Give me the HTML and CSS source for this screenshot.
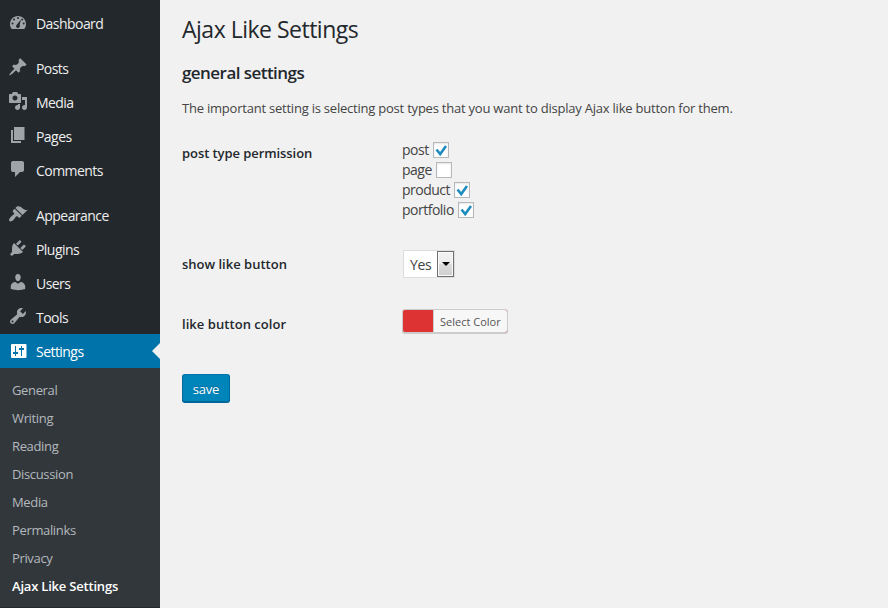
FILE: index.html
```html
<!DOCTYPE html>
<html lang="en">
<head>
<meta charset="utf-8">
<title>Ajax Like Settings</title>
<link rel="stylesheet" href="styles.css">
</head>
<body>
<div class="layout">
<nav class="sidebar">
<ul class="menu">
<li class="item gap"><svg class="icon" viewBox="0 0 20 20"><path fill-rule="evenodd" d="M3.76 17h12.48c1.1-1.37 1.76-3.11 1.76-5 0-4.42-3.58-8-8-8s-8 3.58-8 8c0 1.89.66 3.63 1.76 5zM10 5a1 1 0 1 1 0 2a1 1 0 1 1 0-2zM6 6.5a1 1 0 1 1 0 2a1 1 0 1 1 0-2zM13 7.500L11.700 12.500C12.300 14.600 11.500 16 10 16C8.300 16 7.500 14.400 8.500 13.100zM14.200 6.500a1 1 0 1 1 0 2a1 1 0 1 1 0-2zM4.500 10.500a1 1 0 1 1 0 2a1 1 0 1 1 0-2zM15.700 10.500a1 1 0 1 1 0 2a1 1 0 1 1 0-2z"/></svg><span>Dashboard</span></li>
<li class="item"><svg class="icon" viewBox="0 0 20 20"><path d="M10.440 3.020l1.820-1.820 6.360 6.350-1.830 1.820c-1.050-.68-2.480-.57-3.410.36l-.75.75c-.92.93-1.040 2.350-.35 3.410l-1.830 1.820-2.410-2.410-2.800 2.790c-.42.42-3.380 2.710-3.800 2.290s1.860-3.390 2.280-3.810l2.790-2.790L4.100 9.360l1.830-1.820c1.050.69 2.480.57 3.400-.36l.75-.75c.93-.92 1.050-2.350.36-3.410z"/></svg><span>Posts</span></li>
<li class="item"><svg class="icon" viewBox="0 0 20 20"><path d="M13 11V4c0-.55-.45-1-1-1h-1.670L9 1H5L3.670 3H2c-.55 0-1 .45-1 1v7c0 .55.45 1 1 1h10c.55 0 1-.45 1-1zM7 4.500c1.380 0 2.500 1.120 2.500 2.500S8.380 9.500 7 9.500 4.500 8.380 4.500 7 5.620 4.500 7 4.500zM14 6h5v10.500c0 1.380-1.120 2.500-2.500 2.500S14 17.880 14 16.500s1.120-2.500 2.500-2.500c.17 0 .34.02.5.05V9h-3V6zm-4 8.050V13h2v3.500c0 1.380-1.120 2.500-2.500 2.500S7 17.880 7 16.500 8.120 14 9.500 14c.17 0 .34.02.5.05z"/></svg><span>Media</span></li>
<li class="item"><svg class="icon" viewBox="0 0 20 20"><path d="M6 15V2h10.500v13H6zm-1 1h8v2H3V5h2v11z"/></svg><span>Pages</span></li>
<li class="item gap"><svg class="icon" viewBox="0 0 20 20"><path d="M5 2h9c1.100 0 2 .9 2 2v7c0 1.100-.9 2-2 2h-2l-5 5v-5H5c-1.100 0-2-.9-2-2V4c0-1.100.9-2 2-2z"/></svg><span>Comments</span></li>
<li class="item"><svg class="icon" viewBox="0 0 20 20"><path d="M14.480 11.060L7.410 3.990l1.500-1.500c.5-.56 2.300-.47 3.510.32 1.210.8 1.430 1.280 2.910 2.100 1.180.64 2.450 1.260 4.450.85zm-.71.71L6.700 4.700 4.930 6.470c-.39.39-.39 1.020 0 1.410l1.060 1.060c.39.39.39 1.030 0 1.420-.6.6-1.430 1.110-2.210 1.690-.35.26-.7.53-1.010.84C1.430 14.230.4 16.080 1.400 17.070c.99 1 2.840-.03 4.180-1.360.31-.31.58-.66.85-1.020.57-.78 1.080-1.610 1.690-2.210.39-.39 1.020-.39 1.410 0l1.060 1.060c.39.39 1.020.39 1.410 0z"/></svg><span>Appearance</span></li>
<li class="item"><svg class="icon" viewBox="0 0 20 20"><path d="M13.110 4.360L9.870 7.600 8 5.730l3.240-3.240c.35-.34 1.050-.2 1.560.32.52.51.66 1.210.31 1.550zm-8 1.770l.91-1.120 9.010 9.010-1.190.84c-.71.71-2.630 1.160-3.820 1.160H6.140L4.900 17.260c-.59.59-1.540.59-2.120 0-.59-.58-.59-1.530 0-2.120l1.240-1.240v-3.880c0-1.130.4-3.190 1.090-3.890zm7.260 3.970l3.240-3.240c.34-.35 1.040-.21 1.550.31.52.51.66 1.210.31 1.550l-3.240 3.250z"/></svg><span>Plugins</span></li>
<li class="item"><svg class="icon" viewBox="0 0 20 20"><path d="M10 9.250c-2.270 0-2.730-3.440-2.730-3.440C7 4.020 7.820 2 9.970 2c2.160 0 2.980 2.020 2.710 3.810 0 0-.41 3.440-2.680 3.440zm0 2.570L12.720 10c2.390 0 4.520 2.330 4.520 4.530v2.490s-3.650 1.130-7.240 1.130c-3.650 0-7.240-1.130-7.240-1.130v-2.490c0-2.250 1.940-4.480 4.470-4.480z"/></svg><span>Users</span></li>
<li class="item"><svg class="icon" viewBox="0 0 20 20"><path d="M16.680 9.770c-1.340 1.340-3.300 1.670-4.950.99l-5.410 6.520c-.99.99-2.590.99-3.580 0s-.99-2.590 0-3.570l6.520-5.420c-.68-1.650-.35-3.610.99-4.950 1.280-1.280 3.120-1.620 4.720-1.060l-2.890 2.890 2.820 2.820 2.860-2.870c.53 1.580.18 3.390-1.080 4.650zM3.810 16.210c.4.39 1.040.39 1.430 0 .4-.4.4-1.040 0-1.430-.39-.4-1.030-.4-1.430 0-.39.39-.39 1.030 0 1.430z"/></svg><span>Tools</span></li>
<li class="item current"><svg class="icon" viewBox="0 0 20 20"><path fill-rule="evenodd" d="M4 4H17.500Q18.500 4 18.500 5V17Q18.500 18 17.500 18H4Q3 18 3 17V5Q3 4 4 4zM7 6v6H5v2h2v2h1v-2h2v-2H8V6zM13 6v2h-2v2h2v6h1v-6h2V8h-2V6z"/></svg><span>Settings</span></li>
</ul>
<ul class="submenu">
<li>General</li>
<li>Writing</li>
<li>Reading</li>
<li>Discussion</li>
<li>Media</li>
<li>Permalinks</li>
<li>Privacy</li>
<li class="active">Ajax Like Settings</li>
</ul>
</nav>
<main class="content">
<h1>Ajax Like Settings</h1>
<h2>general settings</h2>
<p class="intro">The important setting is selecting post types that you want to display Ajax like button for them.</p>
<form class="form">
<div class="row types">
<div class="name">post type permission</div>
<div class="options">
<label><span>post</span><i class="check"><svg viewBox="0 0 16 16"><path d="M3.500 7.500L7.200 12L13 4"/></svg></i></label>
<label><span>page</span><i class="check"></i></label>
<label><span>product</span><i class="check"><svg viewBox="0 0 16 16"><path d="M3.500 7.500L7.200 12L13 4"/></svg></i></label>
<label><span>portfolio</span><i class="check"><svg viewBox="0 0 16 16"><path d="M3.500 7.500L7.200 12L13 4"/></svg></i></label>
</div>
</div>
<div class="row show">
<div class="name">show like button</div>
<div class="select"><span>Yes</span><b class="arrow"></b></div>
</div>
<div class="row color">
<div class="name">like button color</div>
<div class="picker"><span>Select Color</span></div>
</div>
<button type="button" class="save">save</button>
</form>
</main>
</div>
</body>
</html>
```
FILE: styles.css
```css
* { box-sizing: border-box; }
body {
  margin: 0;
  background: #f1f1f1;
  color: #444;
  font: 13px/20px "Open Sans", "Noto Sans", sans-serif;
}
ul { margin: 0; padding: 0; list-style: none; }
.layout { display: flex; height: 608px; overflow: hidden; }
.sidebar { width: 160px; flex: none; background: #23282d; padding-top: 6px; }
.item {
  display: flex;
  height: 34px;
  padding-left: 8px;
  color: #eee;
  font-size: 14px;
  line-height: 36px;
  letter-spacing: -0.55px;
}
.item.gap { margin-bottom: 11px; }
.icon { width: 20px; height: 20px; margin: 6px 8px 0 0; fill: #9fa4a8; }
.item.current {
  position: relative;
  background: #0073aa;
  color: #fff;
}
.item.current .icon { fill: #fff; }
.item.current::after {
  content: "";
  position: absolute;
  right: 0;
  top: 9px;
  border: 8px solid transparent;
  border-left: 0;
  border-right-color: #f1f1f1;
}
.submenu {
  height: 239px;
  padding: 8px 12px;
  background: #32373c;
  color: #b4b9be;
}
.submenu li { height: 28px; line-height: 28px; letter-spacing: -0.35px; white-space: nowrap; }
.submenu .active { color: #fff; font-weight: 600; letter-spacing: -0.2px; }
.content { flex: 1; padding: 14px 0 0 22px; }
h1 {
  margin: 0;
  color: #23282d;
  font-size: 23px;
  font-weight: 400;
  line-height: 30px;
  letter-spacing: -0.5px;
}
h2 {
  margin: 19px 0 0;
  color: #23282d;
  font-size: 17px;
  font-weight: 600;
  line-height: 20px;
  letter-spacing: -0.55px;
}
.intro { margin: 15px 0 0; letter-spacing: -0.22px; white-space: nowrap; }
.form { display: flex; flex-direction: column; align-items: flex-start; }
.row { display: flex; }
.name { width: 220px; color: #23282d; font-weight: 600; }
.types { margin-top: 22px; height: 80px; }
.types .name { padding-top: 3px; letter-spacing: -0.07px; }
.options label { display: flex; height: 20px; font-size: 14px; letter-spacing: -0.5px; }
.check {
  width: 16px;
  height: 16px;
  margin: 2px 0 0 4px;
  border: 1px solid #b4b9be;
  background: #fff;
  box-shadow: inset 0 1px 2px rgba(0, 0, 0, .1);
}
.check svg { display: block; width: 16px; height: 16px; margin: -1px; fill: none; stroke: #1e8cbe; stroke-width: 2.6; }
.show { margin-top: 30px; height: 28px; }
.show .name { padding-top: 4px; }
.select {
  display: flex;
  width: 52px;
  height: 28px;
  margin-left: 1px;
  border: 1px solid #ddd;
  background: #fff;
  font-size: 14px;
  line-height: 28px;
  letter-spacing: -0.4px;
}
.select span { width: 33px; padding-left: 6px; }
.arrow {
  display: flex;
  width: 17px;
  height: 26px;
  border: 1px solid #707070;
  background: linear-gradient(#f2f2f2, #ebebeb 50%, #ddd 50%, #cfcfcf);
  box-shadow: inset 0 0 0 1px #fafafa;
}
.arrow::before {
  content: "";
  margin: 10px 0 0 4px;
  width: 0;
  height: 0;
  border: 4px solid transparent;
  border-top-color: #000;
  border-bottom: 0;
}
.color { margin-top: 31px; height: 24px; }
.color .name { padding-top: 5px; letter-spacing: 0.05px; }
.picker {
  width: 106px;
  height: 24px;
  padding-left: 30px;
  border: 1px solid #ccc;
  border-radius: 3px;
  background: #dd3333;
  box-shadow: 0 1px 0 #ccc;
}
.picker span {
  display: block;
  height: 22px;
  padding-left: 6px;
  border-left: 1px solid #ccc;
  border-radius: 0 2px 2px 0;
  background: #f7f7f7;
  color: #555;
  font-size: 11px;
  line-height: 24px;
  white-space: nowrap;
}
.save {
  width: 48px;
  height: 28px;
  margin-top: 41px;
  padding: 0;
  border: 1px solid #006799;
  border-top-color: #0073aa;
  border-radius: 3px;
  background: #0085ba;
  box-shadow: 0 1px 0 #006799;
  color: #fff;
  font: 13px/28px "Open Sans", "Noto Sans", sans-serif;
  letter-spacing: -0.2px;
  text-shadow: 0 -1px 1px #006799;
}
```
